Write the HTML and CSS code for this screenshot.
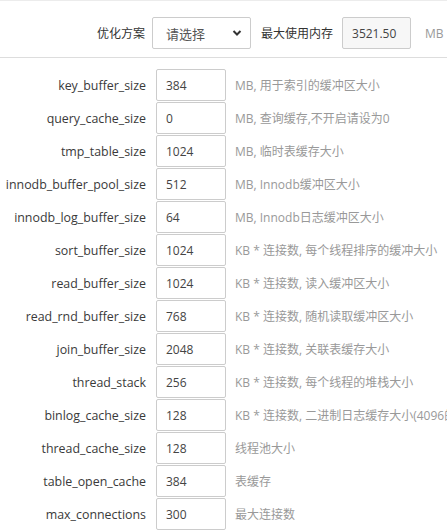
FILE: index.html
```html
<!DOCTYPE html>
<html lang="zh">
<head>
<meta charset="utf-8">
<link rel="stylesheet" href="styles.css">
</head>
<body>
<div class="page">
  <div class="topbar">
    <span class="top-label">优化方案</span>
    <div class="select">
      <span>请选择</span>
      <svg class="chev" width="10" height="8" viewBox="0 0 10 8"><path d="M1.5 2 L5 5.5 L8.5 2" fill="none" stroke="#333" stroke-width="2"/></svg>
    </div>
    <span class="top-label2">最大使用内存</span>
    <div class="input readonly">3521.50</div>
    <span class="unit">MB</span>
  </div>
  <div class="rows">
    <div class="row"><label>key_buffer_size</label><div class="input">384</div><span class="desc">MB, 用于索引的缓冲区大小</span></div>
    <div class="row"><label>query_cache_size</label><div class="input">0</div><span class="desc">MB, 查询缓存,不开启请设为0</span></div>
    <div class="row"><label>tmp_table_size</label><div class="input">1024</div><span class="desc">MB, 临时表缓存大小</span></div>
    <div class="row"><label>innodb_buffer_pool_size</label><div class="input">512</div><span class="desc">MB, Innodb缓冲区大小</span></div>
    <div class="row"><label>innodb_log_buffer_size</label><div class="input">64</div><span class="desc">MB, Innodb日志缓冲区大小</span></div>
    <div class="row"><label>sort_buffer_size</label><div class="input">1024</div><span class="desc">KB * 连接数, 每个线程排序的缓冲大小</span></div>
    <div class="row"><label>read_buffer_size</label><div class="input">1024</div><span class="desc">KB * 连接数, 读入缓冲区大小</span></div>
    <div class="row"><label>read_rnd_buffer_size</label><div class="input">768</div><span class="desc">KB * 连接数, 随机读取缓冲区大小</span></div>
    <div class="row"><label>join_buffer_size</label><div class="input">2048</div><span class="desc">KB * 连接数, 关联表缓存大小</span></div>
    <div class="row"><label>thread_stack</label><div class="input">256</div><span class="desc">KB * 连接数, 每个线程的堆栈大小</span></div>
    <div class="row"><label>binlog_cache_size</label><div class="input">128</div><span class="desc">KB * 连接数, 二进制日志缓存大小(4096的倍数)</span></div>
    <div class="row"><label>thread_cache_size</label><div class="input">128</div><span class="desc">线程池大小</span></div>
    <div class="row"><label>table_open_cache</label><div class="input">384</div><span class="desc">表缓存</span></div>
    <div class="row"><label>max_connections</label><div class="input">300</div><span class="desc">最大连接数</span></div>
  </div>
</div>
</body>
</html>
```
FILE: styles.css
```css
html, body {
  margin: 0;
  padding: 0;
  background: #fff;
}
body {
  font-family: "Open Sans", "Noto Sans CJK SC", sans-serif;
  font-size: 12px;
  color: #333;
  overflow: hidden;
}
.page {
  width: 447px;
  height: 532px;
  border-top: 1px solid #ececec;
  box-sizing: border-box;
  overflow: hidden;
}
.topbar {
  display: flex;
  align-items: center;
  height: 32px;
  margin-top: 16px;
  padding-bottom: 8px;
  border-bottom: 1px solid #ddd;
  white-space: nowrap;
}
.top-label {
  width: 145px;
  text-align: right;
  margin-right: 7px;
  flex: none;
}
.select {
  width: 99px;
  height: 32px;
  box-sizing: border-box;
  border: 1px solid #ccc;
  border-radius: 2px;
  display: flex;
  align-items: center;
  justify-content: space-between;
  padding: 0 8px 0 13px;
  color: #555;
  font-size: 13px;
  flex: none;
}
.top-label2 {
  margin-left: 10px;
  margin-right: 9px;
  flex: none;
}
.input {
  width: 70px;
  height: 32px;
  box-sizing: border-box;
  border: 1px solid #ccc;
  border-radius: 2px;
  padding-left: 9px;
  display: flex;
  align-items: center;
  color: #444;
  flex: none;
}
.input.readonly {
  background: #f7f7f7;
  width: 69px;
}
.unit {
  margin-left: 14px;
  color: #999;
  flex: none;
}
.rows {
  padding-top: 11px;
  display: flex;
  flex-direction: column;
  gap: 1px;
}
.row {
  display: flex;
  align-items: center;
  height: 32px;
  white-space: nowrap;
}
.row label {
  width: 146px;
  text-align: right;
  margin-right: 10px;
  font-size: 12.4px;
  color: #3a3a3a;
  flex: none;
}
.desc {
  margin-left: 9px;
  color: #999;
}
```
